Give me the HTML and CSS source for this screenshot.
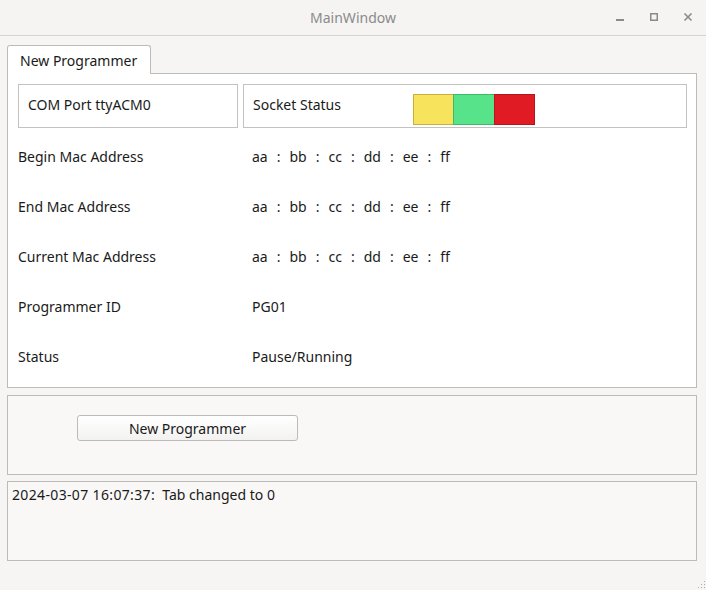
FILE: index.html
```html
<!DOCTYPE html>
<html>
<head>
<meta charset="utf-8">
<link rel="stylesheet" href="styles.css">
</head>
<body>
<div class="window">
  <div class="titlebar">
    <span class="title">MainWindow</span>
    <div class="controls">
      <svg class="ctl" width="12" height="12" viewBox="0 0 12 12"><rect x="2" y="8" width="8" height="2" fill="#8a8a8a"/></svg>
      <svg class="ctl" width="12" height="12" viewBox="0 0 12 12"><rect x="2.75" y="2.75" width="6.5" height="6.5" fill="none" stroke="#8a8a8a" stroke-width="1.5"/></svg>
      <svg class="ctl" width="12" height="12" viewBox="0 0 12 12"><path d="M2.5 2.5 L9.5 9.5 M9.5 2.5 L2.5 9.5" stroke="#8a8a8a" stroke-width="1.6"/></svg>
    </div>
  </div>
  <div class="content">
    <div class="tabbar"><div class="tab">New Programmer</div></div>
    <div class="pane">
      <div class="toprow">
        <div class="box com">COM Port ttyACM0</div>
        <div class="box socket">
          <span class="sock-label">Socket Status</span>
          <div class="lights">
            <div class="light yellow"></div>
            <div class="light green"></div>
            <div class="light red"></div>
          </div>
        </div>
      </div>
      <div class="row"><span class="label">Begin Mac Address</span><span class="mac"><span>aa</span><span>:</span><span>bb</span><span>:</span><span>cc</span><span>:</span><span>dd</span><span>:</span><span>ee</span><span>:</span><span>ff</span></span></div>
      <div class="row"><span class="label">End Mac Address</span><span class="mac"><span>aa</span><span>:</span><span>bb</span><span>:</span><span>cc</span><span>:</span><span>dd</span><span>:</span><span>ee</span><span>:</span><span>ff</span></span></div>
      <div class="row"><span class="label">Current Mac Address</span><span class="mac"><span>aa</span><span>:</span><span>bb</span><span>:</span><span>cc</span><span>:</span><span>dd</span><span>:</span><span>ee</span><span>:</span><span>ff</span></span></div>
      <div class="row"><span class="label">Programmer ID</span><span class="value">PG01</span></div>
      <div class="row"><span class="label">Status</span><span class="value">Pause/Running</span></div>
    </div>
    <div class="group">
      <button class="btn">New Programmer</button>
    </div>
    <div class="log"><span class="stamp">2024-03-07 16:07:37:</span>  Tab changed to 0</div>
  </div>
  <svg class="grip" width="8" height="8" viewBox="0 0 8 8">
    <rect x="6" y="0" width="1" height="1" fill="#aaa"/>
    <rect x="3" y="3" width="1" height="1" fill="#aaa"/>
    <rect x="6" y="3" width="1" height="1" fill="#aaa"/>
    <rect x="0" y="6" width="1" height="1" fill="#aaa"/>
    <rect x="3" y="6" width="1" height="1" fill="#aaa"/>
    <rect x="6" y="6" width="1" height="1" fill="#aaa"/>
  </svg>
</div>
</body>
</html>
```

FILE: styles.css
```css
* { box-sizing: border-box; }
html, body {
  margin: 0;
  padding: 0;
  width: 706px;
  height: 590px;
  overflow: hidden;
  background: #f6f5f4;
}
body {
  font-family: "Noto Sans", "DejaVu Sans", sans-serif;
  font-size: 14px;
  color: #1a1a1a;
}
.window {
  position: relative;
  width: 706px;
  height: 590px;
  background: #f6f5f4;
}
.titlebar {
  position: relative;
  height: 36px;
  border-bottom: 1px solid #d6d3d0;
  background: #f5f4f3;
  display: flex;
  align-items: center;
  justify-content: center;
}
.title {
  color: #8b8b8b;
  font-family: "Noto Sans", sans-serif;
  font-size: 14px;
  margin-top: -1px;
}
.controls {
  position: absolute;
  right: 12px;
  top: 11px;
  display: flex;
  gap: 22px;
}
.ctl { display: block; }
.content {
  padding: 9px 9px 0 7px;
}
.tabbar {
  display: flex;
  height: 28px;
}
.tab {
  width: 144px;
  height: 29px;
  background: #ffffff;
  border: 1px solid #bdbbb8;
  border-bottom: none;
  border-radius: 3px 3px 0 0;
  padding: 6px 0 0 12px;
  position: relative;
  z-index: 1;
  line-height: 18px;
}
.pane {
  height: 315px;
  background: #ffffff;
  border: 1px solid #bdbbb8;
  padding: 10px 9px 0 10px;
}
.toprow {
  display: flex;
  gap: 5px;
  height: 44px;
}
.box {
  border: 1px solid #c4c2bf;
  height: 44px;
}
.com {
  width: 220px;
  padding: 10px 0 0 9px;
  line-height: 20px;
}
.socket {
  flex: 1;
  display: flex;
  align-items: flex-start;
  padding: 10px 0 0 9px;
  line-height: 20px;
}
.sock-label {
  width: 160px;
}
.lights {
  display: flex;
  margin-top: -1px;
}
.light {
  width: 41px;
  height: 31px;
  border: 1px solid;
}
.light + .light { margin-left: -1px; }
.yellow { background: #f8e45c; border-color: #c8b040; }
.green { background: #57e389; border-color: #3fb86a; width: 42px; }
.red { background: #e01b24; border-color: #b5161d; }
.row {
  display: flex;
  align-items: center;
  height: 50px;
}
.toprow + .row { margin-top: 3px; }
.label { width: 234px; }
.mac {
  display: flex;
  gap: 9px;
}
.group {
  margin-top: 7px;
  height: 80px;
  border: 1px solid #bdbbb8;
  background: #f9f8f7;
  padding: 19px 0 0 69px;
}
.btn {
  display: block;
  width: 221px;
  height: 26px;
  font-family: "Noto Sans", "DejaVu Sans", sans-serif;
  font-size: 14px;
  color: #1a1a1a;
  background: linear-gradient(#ffffff, #f3f2f1);
  border: 1px solid #bdbbb8;
  border-radius: 3px;
  padding: 1px 0 0 0;
  line-height: 22px;
}
.log {
  margin-top: 6px;
  height: 80px;
  border: 1px solid #bdbbb8;
  background: #f9f8f7;
  padding: 3px 0 0 4px;
  line-height: 20px;
  white-space: pre;
}
.stamp {
  letter-spacing: 0.35px;
}
.grip {
  position: absolute;
  right: 0;
  bottom: 1px;
}
```
